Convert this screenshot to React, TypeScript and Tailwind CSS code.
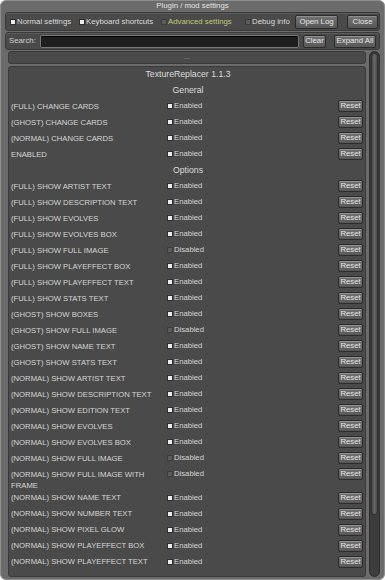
import React from 'react';

type Row = { label: string; on: boolean };

const general: Row[] = [
  { label: '(FULL) CHANGE CARDS', on: true },
  { label: '(GHOST) CHANGE CARDS', on: true },
  { label: '(NORMAL) CHANGE CARDS', on: true },
  { label: 'ENABLED', on: true },
];

const options: Row[] = [
  { label: '(FULL) SHOW ARTIST TEXT', on: true },
  { label: '(FULL) SHOW DESCRIPTION TEXT', on: true },
  { label: '(FULL) SHOW EVOLVES', on: true },
  { label: '(FULL) SHOW EVOLVES BOX', on: true },
  { label: '(FULL) SHOW FULL IMAGE', on: false },
  { label: '(FULL) SHOW PLAYEFFECT BOX', on: true },
  { label: '(FULL) SHOW PLAYEFFECT TEXT', on: true },
  { label: '(FULL) SHOW STATS TEXT', on: true },
  { label: '(GHOST) SHOW BOXES', on: true },
  { label: '(GHOST) SHOW FULL IMAGE', on: false },
  { label: '(GHOST) SHOW NAME TEXT', on: true },
  { label: '(GHOST) SHOW STATS TEXT', on: true },
  { label: '(NORMAL) SHOW ARTIST TEXT', on: true },
  { label: '(NORMAL) SHOW DESCRIPTION TEXT', on: true },
  { label: '(NORMAL) SHOW EDITION TEXT', on: true },
  { label: '(NORMAL) SHOW EVOLVES', on: true },
  { label: '(NORMAL) SHOW EVOLVES BOX', on: true },
  { label: '(NORMAL) SHOW FULL IMAGE', on: false },
  { label: '(NORMAL) SHOW FULL IMAGE WITH FRAME', on: false },
  { label: '(NORMAL) SHOW NAME TEXT', on: true },
  { label: '(NORMAL) SHOW NUMBER TEXT', on: true },
  { label: '(NORMAL) SHOW PIXEL GLOW', on: true },
  { label: '(NORMAL) SHOW PLAYEFFECT BOX', on: true },
  { label: '(NORMAL) SHOW PLAYEFFECT TEXT', on: true },
];

const Box: React.FC<{ on: boolean }> = ({ on }) => (
  <span
    className={
      on
        ? 'inline-block w-[6px] h-[6px] mr-[1px] shrink-0 border border-[#2e2e2e] bg-[#ececec]'
        : 'inline-block w-[6px] h-[6px] mr-[1px] shrink-0 border border-[#3a3a3a] bg-[#5c5c5c]'
    }
  />
);

const Btn: React.FC<{ children: React.ReactNode; className?: string }> = ({ children, className }) => (
  <div
    className={
      'flex items-center justify-center rounded-[2px] border border-[#2b2b2b] bg-gradient-to-b from-[#727272] to-[#585858] text-[#e6e6e6] shadow-[inset_0_1px_0_#8e8e8e] leading-none ' +
      (className ?? '')
    }
  >
    {children}
  </div>
);

const SettingRow: React.FC<{ row: Row }> = ({ row }) => (
  <div className="flex items-start min-h-[16px]">
    <div className="w-[156px] shrink-0 pt-[1.5px] leading-[11px] text-[7.7px] text-[#d6d6d6]">{row.label}</div>
    <div className="flex items-center h-[14px] text-[7.7px] text-[#d6d6d6]">
      <Box on={row.on} />
      {row.on ? 'Enabled' : 'Disabled'}
    </div>
    <div className="flex-1 flex justify-end pt-[1px] pr-[2px]">
      <Btn className="w-[25px] h-[12px] text-[7.7px]">Reset</Btn>
    </div>
  </div>
);

const Heading: React.FC<{ children: React.ReactNode }> = ({ children }) => (
  <div className="h-[16px] flex items-center justify-center text-[8.7px] text-[#dcdcdc]">{children}</div>
);

export default function App() {
  return (
    <div
      className="w-[385px] h-[580px] bg-white overflow-hidden"
      style={{ fontFamily: '"Liberation Sans", Arial, sans-serif' }}
    >
      <div className="h-full flex flex-col rounded-[6px] border border-[#8e8e8e] bg-[#6b6b6b] px-[4px] pb-[2px]">
        {/* title */}
        <div className="h-[10px] flex items-center justify-center text-[7.8px] text-[#e4e4e4]">Plugin / mod settings</div>

        {/* toolbar */}
        <div className="mt-[1px] h-[19px] flex items-center rounded-[3px] border border-[#3a3a3a] bg-[#4a4a4a] shadow-[inset_0_1px_0_#5a5a5a] pl-[4px] pr-[1px] text-[7.8px] text-[#dcdcdc]">
          <div className="flex items-center w-[69px]">
            <Box on={true} />
            Normal settings
          </div>
          <div className="flex items-center w-[82px]">
            <Box on={true} />
            Keyboard shortcuts
          </div>
          <div className="flex items-center w-[84px] text-[#c3c97e]">
            <Box on={false} />
            Advanced settings
          </div>
          <div className="flex items-center w-[50px]">
            <Box on={false} />
            Debug info
          </div>
          <Btn className="w-[43px] h-[14px] text-[7.8px]">Open Log</Btn>
          <div className="flex-1" />
          <Btn className="w-[31px] h-[14px] text-[7.8px]">Close</Btn>
        </div>

        {/* search */}
        <div className="mt-[1px] h-[18px] flex items-center rounded-[3px] border border-[#3a3a3a] bg-[#4a4a4a] shadow-[inset_0_1px_0_#5a5a5a] pl-[3px] pr-[3px] text-[7.8px] text-[#d0d0d0]">
          <span className="w-[31px]">Search:</span>
          <div className="w-[259px] h-[13px] rounded-[2px] border border-[#777] bg-[#1e1e1e] shadow-[inset_0_1px_1px_#000]" />
          <div className="w-[4px]" />
          <Btn className="w-[23px] h-[13px] text-[7.8px]">Clear</Btn>
          <div className="flex-1" />
          <Btn className="w-[42px] h-[13px] text-[7.8px]">Expand All</Btn>
        </div>

        {/* scroll area */}
        <div className="mt-[1px] flex-1 flex min-h-0 pl-[3px]">
          <div className="w-[359px] flex flex-col gap-[2px] overflow-hidden">
            <div className="h-[13px] shrink-0 flex items-center justify-center rounded-[3px] border border-[#3a3a3a] bg-[#4a4a4a] text-[7px] text-[#a8a8a8]">
              ...
            </div>
            <div className="flex-1 rounded-[3px] border border-[#3a3a3a] bg-[#4a4a4a] pl-[2px]">
              <Heading>TextureReplacer 1.1.3</Heading>
              <Heading>General</Heading>
              {general.map(r => (
                <SettingRow key={r.label} row={r} />
              ))}
              <Heading>Options</Heading>
              {options.map(r => (
                <SettingRow key={r.label} row={r} />
              ))}
            </div>
          </div>
          <div className="ml-[3px] w-[11px] rounded-full border border-[#2e2e2e] bg-[#3c3c3c] p-[1px] flex flex-col">
            <div className="h-[462px] rounded-full border border-[#2e2e2e] bg-gradient-to-r from-[#4e4e4e] via-[#666] to-[#4e4e4e]" />
          </div>
        </div>
      </div>
    </div>
  );
}
